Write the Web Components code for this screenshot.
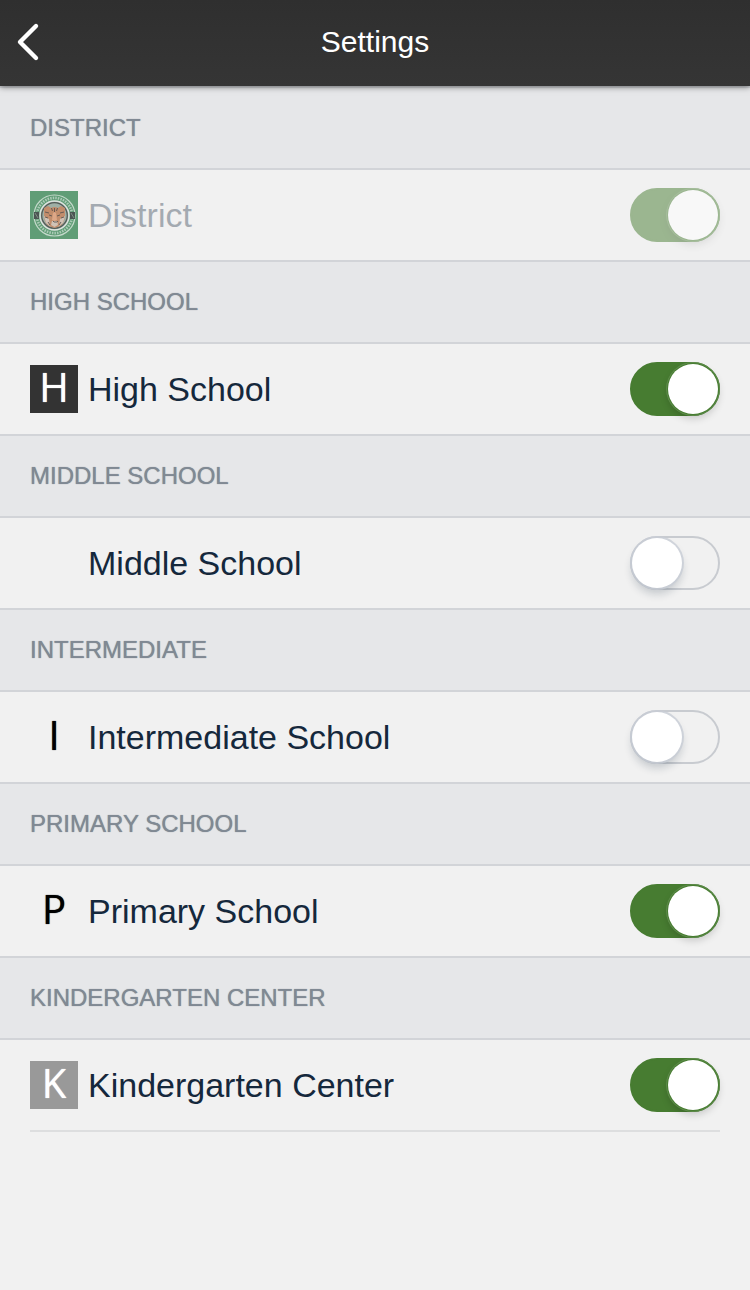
<!DOCTYPE html>
<html lang="en">
<head>
<meta charset="utf-8">
<meta name="viewport" content="width=device-width">
<title>Settings</title>
<style>
body {
    margin:0;
    font-family:"Liberation Sans",Arial,sans-serif;
    color:#15283c; background:#f1f1f1;
}
</style>
</head>
<body>
<app-bar>Settings</app-bar>
<main>
    <school-group name="District">
        <school-row on locked><crest-icon slot="icon"></crest-icon>District</school-row>
    </school-group>
    <school-group name="High School">
        <school-row on><letter-icon slot="icon" theme="dark">H</letter-icon>High School</school-row>
    </school-group>
    <school-group name="Middle School">
        <school-row>Middle School</school-row>
    </school-group>
    <school-group name="Intermediate">
        <school-row><letter-icon slot="icon">I</letter-icon>Intermediate School</school-row>
    </school-group>
    <school-group name="Primary School">
        <school-row on><letter-icon slot="icon">P</letter-icon>Primary School</school-row>
    </school-group>
    <school-group name="Kindergarten Center" last>
        <school-row on><letter-icon slot="icon" theme="gray">K</letter-icon>Kindergarten Center</school-row>
    </school-group>
</main>

<script>
class Bar extends HTMLElement {
    constructor() {
        super();
        this.attachShadow({mode: 'open'}).innerHTML = `
        <button type="button" aria-label="Back">
            <svg width="24" height="40" viewBox="0 0 24 40"><path d="M20 4 4 20l16 16"/></svg>
        </button>
        <h1><slot></slot></h1>
        <style>
        :host {
            display:grid; grid-template-columns:56px 1fr 56px; align-items:center;
            position:relative; z-index:1;
            box-sizing:border-box; height:86px; padding-bottom:3px;
            color:white; background:linear-gradient(#2f2f2f,#353535);
            box-shadow:0 1px 6px rgba(0,0,0,.5);
        }
        button {
            display:flex; align-items:center;
            height:82px; padding:0 16px;
            border:0; background:none; color:inherit;
        }
        path {fill:none; stroke:currentColor; stroke-width:4.4; stroke-linecap:round; stroke-linejoin:round;}
        h1 {margin:0; font-size:30px; font-weight:400; line-height:40px; text-align:center;}
        </style>`;
    }
}

class Group extends HTMLElement {
    constructor() {
        super();
        this.attachShadow({mode: 'open'}).innerHTML = `
        <h2></h2>
        <slot></slot>
        <style>
        :host {display:block;}
        :host([last])::after {
            content:'';
            display:block;
            margin:0 30px;
            border-bottom:2px solid #dddedf;
        }
        h2 {
            margin:0; padding:0 30px;
            border:solid #d2d4d8; border-width:2px 0;
            color:#808993; background:#e6e7e9;
            font-size:24px; font-weight:400; line-height:80px;
            text-transform:uppercase; text-shadow:0 0 1px #808993;
        }
        </style>`;
    }
    connectedCallback() {
        this.shadowRoot.querySelector('h2').textContent = this.getAttribute('name');
    }
}

class Row extends HTMLElement {
    constructor() {
        super();
        this.attachShadow({mode: 'open'}).innerHTML = `
        <div><slot name="icon"></slot></div>
        <label for="toggle"><slot></slot></label>
        <input type="checkbox" id="toggle" role="switch">
        <style>
        :host {
            display:flex; align-items:center; gap:10px;
            height:90px; padding:0 30px;
        }
        div {width:48px; height:48px;}
        label {flex:1; font-size:34px; line-height:40px;}
        input {
            appearance:none;
            box-sizing:border-box;
            width:90px; height:54px; margin:0;
            border:2px solid #c8cbd0; border-radius:27px;

            &::before {
                content:'';
                display:block;
                width:50px; height:50px;
                border-radius:50%;
                background:white;
                box-shadow:0 0 0 2px rgba(200,205,214,.8), 0 6px 8px rgba(20,40,60,.2);
            }
            &:checked {border-color:#477c31; background:#477c31;}
            &:checked::before {
                margin-left:auto;
                box-shadow:0 0 0 1px #477c31, 0 0 0 2px #5d8b4a, 0 4px 8px rgba(0,0,0,.2);
            }
        }
        :host([locked]) label {opacity:.35;}
        :host([locked]) input {opacity:.5;}
        </style>`;
    }
    connectedCallback() {
        let input = this.shadowRoot.querySelector('input');
        input.checked = this.hasAttribute('on');
        input.disabled = this.hasAttribute('locked');
    }
}

class Letter extends HTMLElement {
    constructor() {
        super();
        this.attachShadow({mode: 'open'}).innerHTML = `
        <slot></slot>
        <style>
        :host {
            display:block;
            width:48px; height:48px;
            color:black;
            font:40px/44px "Open Sans",sans-serif; text-align:center;
            text-shadow:0 0 1px;
        }
        :host([theme=dark]) {color:white; background:#333;}
        :host([theme=gray]) {color:white; background:#999;}
        </style>`;
    }
}

class Crest extends HTMLElement {
    constructor() {
        super();
        this.attachShadow({mode: 'open'}).innerHTML = `
        <svg width="48" height="48" viewBox="0 0 48 48" fill="none">
            <path fill="#609d76" d="M0 0h48v48H0z"/>
            <circle cx="24.500" cy="24.500" r="20.500" stroke="#c3d9ca" stroke-width="1.200"/>
            <circle cx="24.500" cy="24.500" r="17.600" stroke="#c6dbce" stroke-width="2.600" stroke-dasharray="1.500 1.100" opacity=".75"/>
            <path fill="#4b5653" d="M4 21h5v7H4zM40 21h5v7h-5z"/>
            <path stroke="#8b9a91" d="m5 22 3 5m33-5 3 5" stroke-width=".8"/>
            <circle cx="24.500" cy="24.500" r="14.500" fill="#9fb0a6" stroke="#dde4df" stroke-width="1.500"/>
            <circle cx="24.500" cy="24.500" r="12.800" stroke="#555c59" stroke-width="1.300"/>
            <path fill="#c28d6c" d="m14 17 4-2 3 2q3.500-2 7 0l3-2 4 2v8q-1 8-5 10l-5.500 2-5.500-2q-4-2-5-10z"/>
            <path fill="#d0c2b6" d="m14 25 5 3 1 7-4-3zm21 0-5 3-1 7 4-3zM22 30h5l1 4-3.500 2-3.500-2z"/>
            <path stroke="#5d5550" stroke-width=".9" d="M24.500 17v4m-3-4 1 3m5-3-1 3M15 21l4 1m15-1-4 1m-15 4 3 1m16-1-3 1m-12-3 3 1m5 0 3-1m-7 6 1 1 3 0 1-1M18 31l2 3m11-3-2 3"/>
            <path fill="#dda787" d="m23 22 1.500-1 1.500 1 1 7-2.500 1-2.500-1z"/>
        </svg>
        <style>
        :host, svg {display:block;}
        </style>`;
    }
}

customElements.define('app-bar', Bar);
customElements.define('school-group', Group);
customElements.define('school-row', Row);
customElements.define('letter-icon', Letter);
customElements.define('crest-icon', Crest);
</script>
</body>
</html>
